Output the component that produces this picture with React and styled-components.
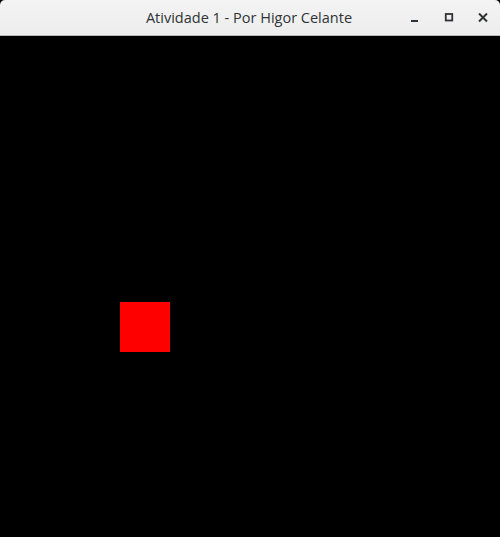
import React from "react";
import styled, { createGlobalStyle } from "styled-components";

const GlobalStyle = createGlobalStyle`
  html, body {
    margin: 0;
    padding: 0;
    background: #000;
  }
`;

const Window = styled.div`
  width: 500px;
  height: 537px;
  display: flex;
  flex-direction: column;
  background: #000;
  overflow: hidden;
`;

const TitleBar = styled.div`
  height: 35px;
  flex-shrink: 0;
  display: flex;
  align-items: center;
  justify-content: center;
  position: relative;
  background: linear-gradient(#f3f3f3, #ededed);
  border-bottom: 1px solid #b6b6b3;
  border-radius: 5px 5px 0 0;
  font-family: "Open Sans", "Noto Sans", sans-serif;
  font-size: 14.5px;
  color: #2e3436;
`;

const Title = styled.span`
  margin-left: -2px;
`;

const Controls = styled.div`
  position: absolute;
  right: 0;
  top: 0;
  height: 35px;
  display: flex;
  align-items: center;
`;

const ControlButton = styled.div`
  width: 34px;
  height: 35px;
  display: flex;
  align-items: center;
  justify-content: center;
`;

const Canvas = styled.div`
  flex: 1;
  padding: 266px 0 0 120px;
`;

const Square = styled.div`
  width: 50px;
  height: 50px;
  background: #ff0000;
`;

export default function App() {
  return (
    <>
      <GlobalStyle />
      <Window>
        <TitleBar>
          <Title>Atividade 1 - Por Higor Celante</Title>
          <Controls>
            <ControlButton>
              <svg width="10" height="10" viewBox="0 0 10 10">
                <rect x="1" y="7" width="7" height="2" fill="#2e3436" />
              </svg>
            </ControlButton>
            <ControlButton>
              <svg width="10" height="10" viewBox="0 0 10 10">
                <rect x="1.75" y="1" width="6.5" height="6.5" fill="none" stroke="#2e3436" strokeWidth="1.8" />
              </svg>
            </ControlButton>
            <ControlButton>
              <svg width="10" height="10" viewBox="0 0 10 10">
                <path d="M1 0.5 L9 8.5 M9 0.5 L1 8.5" stroke="#2e3436" strokeWidth="2" />
              </svg>
            </ControlButton>
          </Controls>
        </TitleBar>
        <Canvas>
          <Square />
        </Canvas>
      </Window>
    </>
  );
}
